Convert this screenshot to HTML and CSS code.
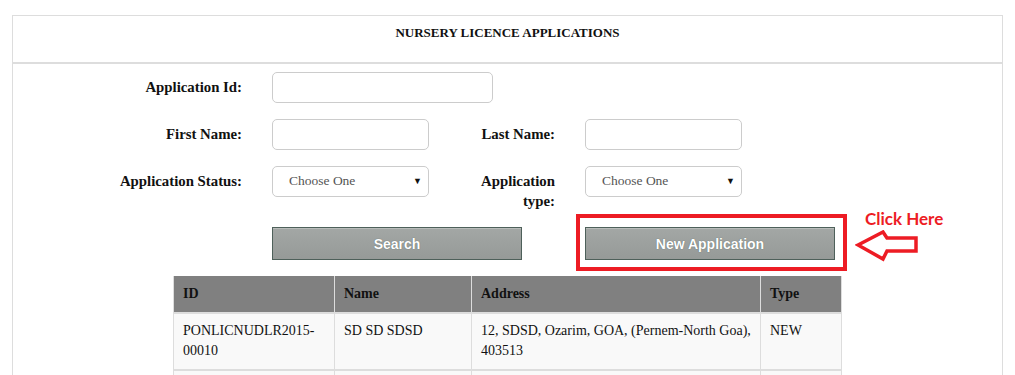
FILE: index.html
```html
<!DOCTYPE html>
<html lang="en">

<head>
    <meta charset="UTF-8">
    <meta name="viewport" content="width=device-width, initial-scale=1.0">
    <title>Nursery Licence Applications</title>
    <link rel="stylesheet" href="styles.css">
</head>

<body>
    <div class="panel">
        <div class="panel-heading">NURSERY LICENCE APPLICATIONS</div>

        <div class="panel-body">
            <form class="search-form" onsubmit="return false;">
                <label class="form-label" for="app-id">Application Id:</label>
                <input type="text" id="app-id" class="form-input wide">
                <span></span>
                <span></span>

                <label class="form-label" for="first-name">First Name:</label>
                <input type="text" id="first-name" class="form-input">
                <label class="form-label" for="last-name">Last Name:</label>
                <input type="text" id="last-name" class="form-input">

                <label class="form-label" for="app-status">Application Status:</label>
                <div class="form-select" id="app-status">Choose One<span class="caret">&#9660;</span></div>
                <label class="form-label" for="app-type">Application type:</label>
                <div class="form-select" id="app-type">Choose One<span class="caret">&#9660;</span></div>

                <span></span>
                <button class="button">Search</button>
                <span></span>
                <div class="highlight">
                    <button class="button">New Application</button>
                    <div class="callout">
                        <span class="callout-text">Click Here</span>
                        <svg class="callout-arrow" width="66" height="34" viewBox="0 0 66 34">
                            <polygon points="3,15 28,2 32,8 61,8 61,21 32,21 28,29" fill="none" stroke="#ed1c24" stroke-width="3.5" stroke-linejoin="miter"/>
                        </svg>
                    </div>
                </div>
            </form>

            <table class="results">
                <thead>
                    <tr>
                        <th class="col-id">ID</th>
                        <th class="col-name">Name</th>
                        <th class="col-address">Address</th>
                        <th class="col-type">Type</th>
                    </tr>
                </thead>
                <tbody>
                    <tr>
                        <td>PONLICNUDLR2015-00010</td>
                        <td>SD SD SDSD</td>
                        <td>12, SDSD, Ozarim, GOA, (Pernem-North Goa), 403513</td>
                        <td>NEW</td>
                    </tr>
                    <tr>
                        <td>&nbsp;</td>
                        <td></td>
                        <td></td>
                        <td></td>
                    </tr>
                </tbody>
            </table>
        </div>
    </div>
</body>

</html>
```

FILE: styles.css
```css
body {
    margin: 0;
    padding: 15px 12px 0 12px;
    background-color: #ffffff;
    font-family: 'Liberation Serif', 'DejaVu Serif', serif;
    font-size: 13px;
    color: #111111;
}

.panel {
    width: 989px;
    border: 1px solid #dddddd;
    border-bottom: none;
    height: 360px;
    overflow: hidden;
}

.panel-heading {
    height: 46px;
    line-height: 34px;
    text-align: center;
    font-weight: bold;
    font-size: 13px;
    border-bottom: 2px solid #dddddd;
}

.panel-body {
    padding-top: 8px;
}

.search-form {
    display: grid;
    grid-template-columns: 229px 157px 96px 157px;
    column-gap: 30px;
    row-gap: 16px;
    align-items: start;
}

.form-label {
    text-align: right;
    font-weight: bold;
    font-size: 14.8px;
    line-height: 20px;
    padding-top: 5px;
}

.form-input {
    box-sizing: border-box;
    width: 157px;
    height: 31px;
    border: 1px solid #cccccc;
    border-radius: 5px;
    background-color: #ffffff;
    margin: 0;
}

.form-input.wide {
    width: 221px;
}

.form-select {
    box-sizing: border-box;
    position: relative;
    width: 157px;
    height: 31px;
    border: 1px solid #cccccc;
    border-radius: 5px;
    padding-left: 16px;
    line-height: 28px;
    font-size: 13.5px;
    color: #555555;
}

.caret {
    position: absolute;
    right: 6px;
    top: 0;
    font-size: 9px;
    color: #111111;
}

.button {
    box-sizing: border-box;
    width: 250px;
    height: 33px;
    margin: 0;
    border: 1px solid #4e605a;
    background: linear-gradient(#a3a7a5, #969a98);
    box-shadow: inset 0 1px 0 #b8bcba;
    color: #ffffff;
    font-family: 'Liberation Sans', Arial, sans-serif;
    font-size: 14px;
    font-weight: bold;
    text-shadow: 0 0 1px #4e605a;
}

.highlight {
    position: relative;
    width: 250px;
    height: 33px;
}

.highlight::before {
    content: '';
    position: absolute;
    left: -9px;
    top: -13px;
    width: 263px;
    height: 49px;
    border: 4px solid #ed1c24;
    pointer-events: none;
}

.callout {
    position: absolute;
    left: 270px;
    top: -18px;
    width: 100px;
}

.callout-text {
    display: block;
    margin-left: 10px;
    font-family: Lato, 'Open Sans', sans-serif;
    font-weight: bold;
    font-size: 17px;
    color: #ed1c24;
    line-height: 20px;
}

.callout-arrow {
    display: block;
    margin-top: 1px;
}

.results {
    margin: 16px auto 0 auto;
    width: 669px;
    border-collapse: collapse;
    font-size: 14px;
}

.results th {
    background-color: #808080;
    text-align: left;
    height: 36px;
    padding: 0 9px;
    border: 1px solid #dddddd;
    border-top: none;
    border-bottom: 2px solid #dddddd;
    font-weight: bold;
}

.results td {
    background-color: #f9f9f9;
    vertical-align: top;
    padding: 7px 9px 8px 9px;
    line-height: 20px;
    border: 1px solid #dddddd;
    border-bottom: 2px solid #dddddd;
}

.col-id {
    width: 142px;
}

.col-name {
    width: 118px;
}

.col-address {
    width: 270px;
}
```
